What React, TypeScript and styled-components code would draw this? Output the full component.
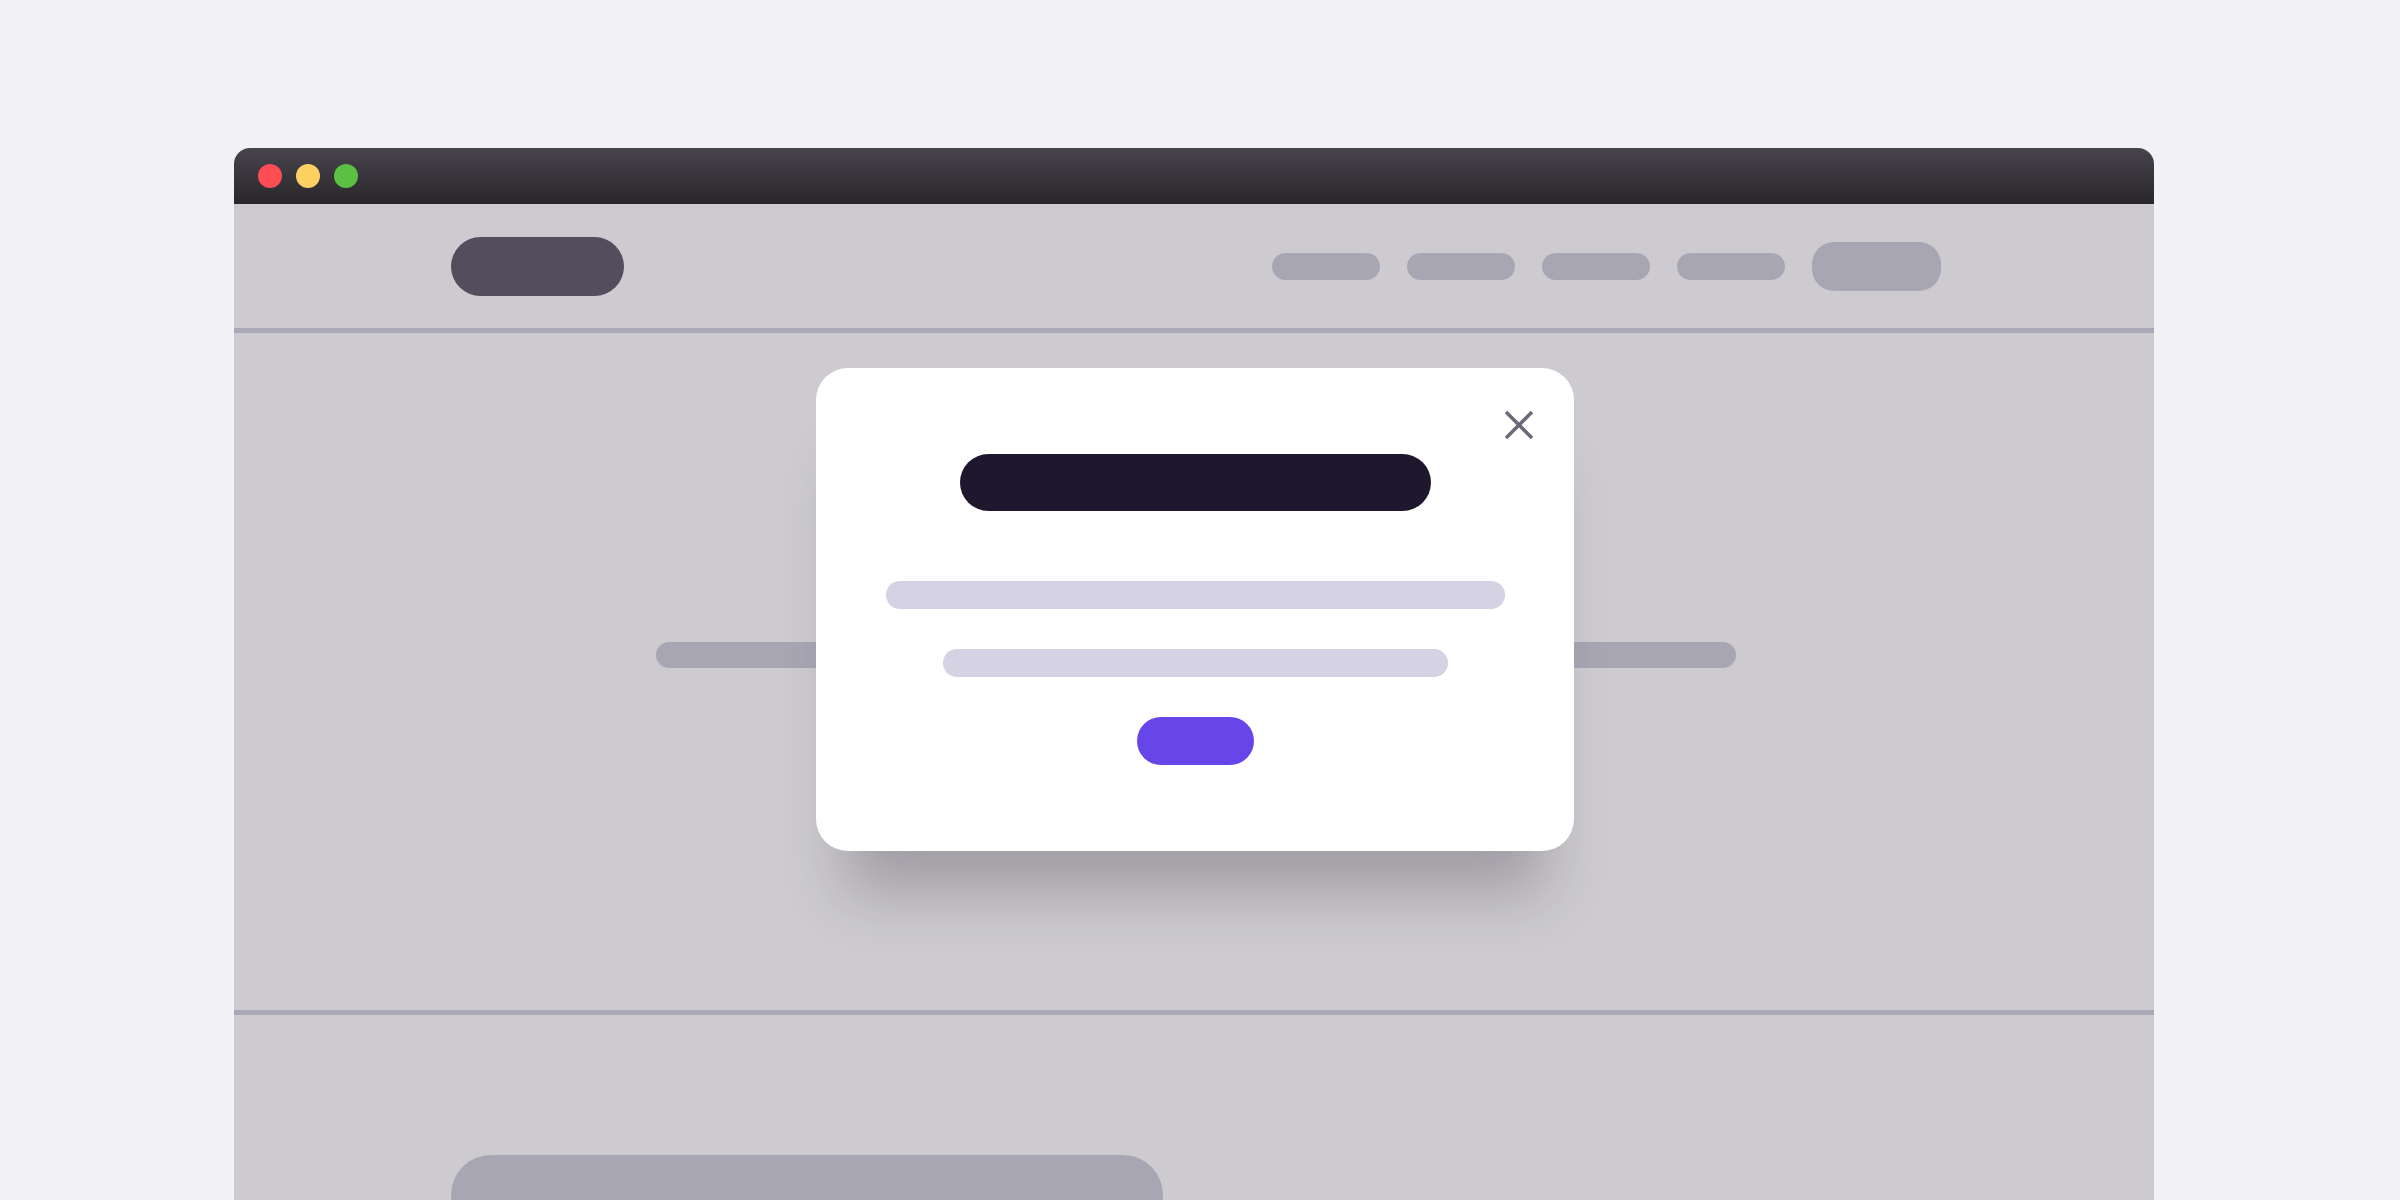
import styled, { createGlobalStyle } from "styled-components"

// **********
// component
// **********

export default function App() {
	return (
		<>
			<GlobalStyle />
			<Window>
				<TitleBar>
					<Light $color="#fd4d54" />
					<Light $color="#fdd162" />
					<Light $color="#5cc142" />
				</TitleBar>
				<Page>
					<Header>
						<Logo />
						<Nav>
							<NavItem />
							<NavItem />
							<NavItem />
							<NavItem />
							<NavButton />
						</Nav>
					</Header>
					<Hero>
						<HeroLine />
					</Hero>
					<Section>
						<SectionBlock />
					</Section>
				</Page>
				<Modal>
					<Close aria-label="close">
						<svg width="30" height="30" viewBox="0 0 30 30">
							<line x1="2" y1="2" x2="28" y2="28" stroke="#6b6878" strokeWidth="3.4" />
							<line x1="28" y1="2" x2="2" y2="28" stroke="#6b6878" strokeWidth="3.4" />
						</svg>
					</Close>
					<ModalTitle />
					<TextLine $width={619} />
					<TextLine $width={505} />
					<ModalButton />
				</Modal>
			</Window>
		</>
	)
}

// **********
// styles
// **********

const GlobalStyle = createGlobalStyle`
	html, body {
		margin: 0;
		height: 100%;
		overflow: hidden;
		background: #f2f1f6;
		font-family: "Inter", "Liberation Sans", sans-serif;
	}
`
const Window = styled.div`
	position: relative;
	width: 1920px;
	margin: 148px 0 0 234px;
	border-radius: 16px 16px 0 0;
	overflow: hidden;
`
const TitleBar = styled.div`
	display: flex;
	align-items: center;
	gap: 14px;
	height: 56px;
	padding-left: 24px;
	background: linear-gradient(to bottom, #47444c, #29262b);
`
const Light = styled.span<{ $color: string }>`
	width: 24px;
	height: 24px;
	border-radius: 50%;
	background: ${({ $color }) => $color};
`
const Page = styled.div`
	background: #cdcbcf;
	height: 1100px;
`
const Header = styled.header`
	display: flex;
	align-items: center;
	justify-content: space-between;
	height: 124px;
	padding: 0 213px 0 217px;
	border-bottom: 5px solid #aba8b8;
`
const Logo = styled.div`
	width: 173px;
	height: 59px;
	border-radius: 30px;
	background: #524e5e;
`
const Nav = styled.nav`
	display: flex;
	align-items: center;
	gap: 27px;
`
const NavItem = styled.span`
	width: 108px;
	height: 27px;
	border-radius: 14px;
	background: #a9a6b4;
`
const NavButton = styled.span`
	width: 129px;
	height: 49px;
	border-radius: 22px;
	background: #a9a6b4;
`
const Hero = styled.section`
	display: flex;
	justify-content: center;
	height: 682px;
	padding: 309px 0 0 4px;
	box-sizing: border-box;
	border-bottom: 5px solid #aba8b8;
`
const HeroLine = styled.div`
	width: 1080px;
	height: 26px;
	border-radius: 13px;
	background: #a9a6b4;
`
const Section = styled.section`
	padding: 140px 0 0 217px;
`
const SectionBlock = styled.div`
	width: 712px;
	height: 80px;
	border-radius: 40px;
	background: #a9a6b4;
`
const Modal = styled.div`
	position: absolute;
	top: 220px;
	left: 582px;
	width: 758px;
	padding: 86px 0;
	box-sizing: border-box;
	display: flex;
	flex-direction: column;
	align-items: center;
	background: #ffffff;
	border-radius: 32px;
	box-shadow: 0 70px 60px -30px rgba(30, 25, 40, 0.26);
`
const Close = styled.button`
	position: absolute;
	top: 42px;
	right: 40px;
	width: 30px;
	height: 30px;
	padding: 0;
	border: 0;
	background: none;
	display: flex;
`
const ModalTitle = styled.div`
	width: 471px;
	height: 57px;
	border-radius: 29px;
	background: #1e172e;
	margin-bottom: 70px;
`
const TextLine = styled.div<{ $width: number }>`
	width: ${({ $width }) => $width}px;
	height: 28px;
	border-radius: 14px;
	background: #d5d2e4;
	margin-bottom: 40px;
`
const ModalButton = styled.div`
	width: 117px;
	height: 48px;
	border-radius: 24px;
	background: #6646e8;
`
